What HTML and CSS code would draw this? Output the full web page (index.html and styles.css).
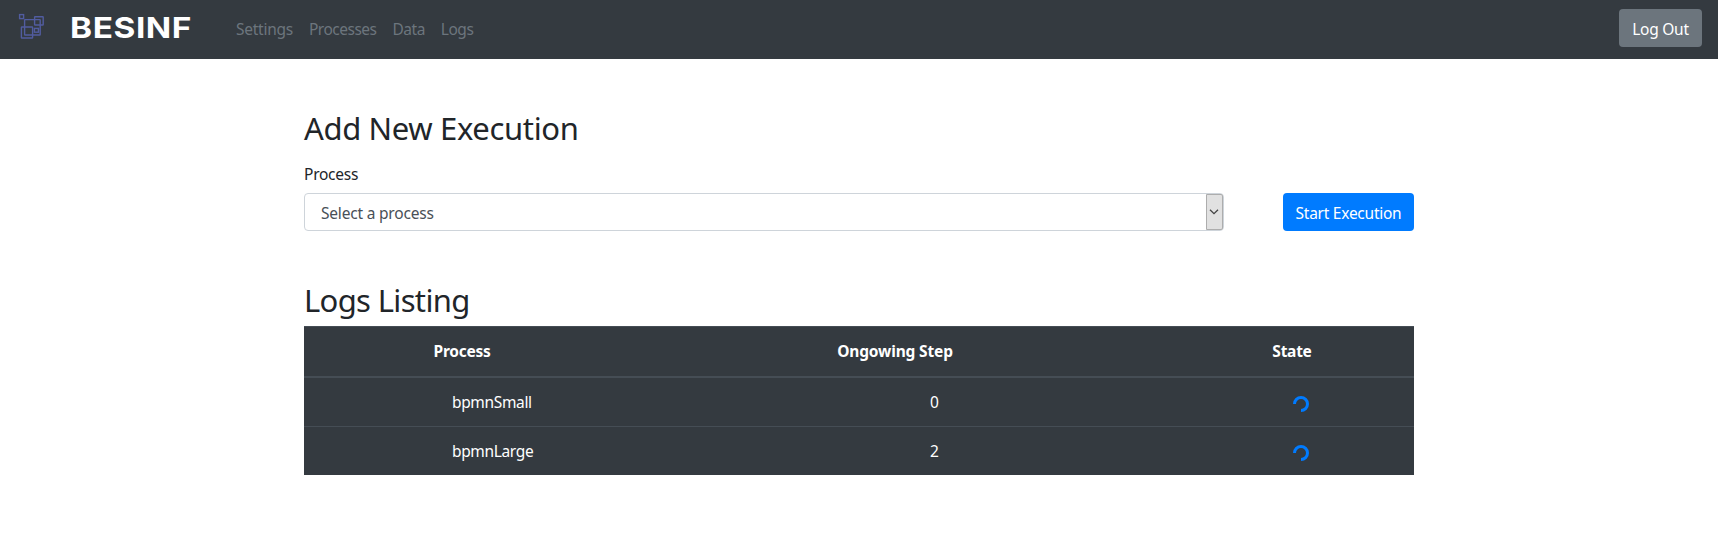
FILE: index.html
```html
<!DOCTYPE html>
<html lang="en">
<head>
<meta charset="utf-8">
<title>BESINF - Logs</title>
<link rel="stylesheet" href="styles.css">
</head>
<body>
<nav class="navbar">
  <svg class="mark" width="26" height="26" viewBox="0 0 26 26" fill="none" stroke="#515c9f" stroke-width="1.4">
    <rect x="1.6" y="1.6" width="4" height="4"/>
    <rect x="6.6" y="6.6" width="15.6" height="15.4" rx=".5"/>
    <rect x="16.6" y="3.8" width="8.6" height="8.2" rx=".5"/>
    <rect x="3.4" y="14" width="11.2" height="11" rx=".5"/>
    <rect x="16.4" y="15.4" width="4" height="3.8"/>
  </svg>
  <span class="brand">BESINF</span>
  <ul class="links">
    <li class="wide">Settings</li>
    <li>Processes</li>
    <li>Data</li>
    <li>Logs</li>
  </ul>
  <button class="btn btn-secondary">Log Out</button>
</nav>
<main class="container">
  <h2 class="title">Add New Execution</h2>
  <label class="label">Process</label>
  <div class="form-row">
    <div class="select">
      <span class="value">Select a process</span>
      <span class="arrow"><svg width="10" height="6" viewBox="0 0 10 6" fill="none" stroke="#444" stroke-width="1.3"><path d="M1 .8 5 4.6 9 .8"/></svg></span>
    </div>
    <button class="btn btn-primary">Start Execution</button>
  </div>
  <h2 class="title listing">Logs Listing</h2>
  <table class="table">
    <colgroup><col class="c1"><col class="c2"><col class="c3"></colgroup>
    <thead><tr><th>Process</th><th class="step">Ongowing Step</th><th>State</th></tr></thead>
    <tbody>
      <tr><td class="name">bpmnSmall</td><td class="num">0</td><td class="state"><svg class="spinner" width="16" height="16" viewBox="0 0 16 16" fill="none" stroke="#007bff" stroke-width="3"><path d="M1.5 8A6.5 6.5 0 1 1 8 14.5"/></svg></td></tr>
      <tr><td class="name">bpmnLarge</td><td class="num">2</td><td class="state"><svg class="spinner" width="16" height="16" viewBox="0 0 16 16" fill="none" stroke="#007bff" stroke-width="3"><path d="M1.5 8A6.5 6.5 0 1 1 8 14.5"/></svg></td></tr>
    </tbody>
  </table>
</main>
</body>
</html>
```
FILE: styles.css
```css
* { box-sizing: border-box; }
body {
  margin: 0;
  background: #fff;
  color: #212529;
  font: 15.5px/24px "Noto Sans", "Open Sans", sans-serif;
  letter-spacing: -.25px;
}
.navbar {
  display: flex;
  align-items: flex-start;
  height: 59px;
  padding: 9px 16px 0 18px;
  background: #343a40;
}
.mark { margin-top: 4px; flex: none; }
.brand {
  width: 166px;
  margin-left: 26px;
  padding-top: 2px;
  color: #fff;
  font: 700 29px/34px Inter, sans-serif;
  letter-spacing: .5px;
  transform: scaleX(1.15);
  transform-origin: 0 0;
}
.links {
  display: flex;
  gap: 16px;
  margin: 0;
  padding: 8px 0 0;
  list-style: none;
  color: #6c757d;
  letter-spacing: -.5px;
}
.wide { letter-spacing: -.25px; }
.btn {
  height: 38px;
  padding: 2px 0 0;
  border: 0;
  border-radius: 4px;
  color: #fff;
  font: inherit;
  letter-spacing: inherit;
}
.btn-secondary { width: 83px; margin-left: auto; background: #6c757d; }
.btn-primary { width: 131px; background: #007bff; }
.container { width: 1110px; margin: 0 auto; padding-top: 48px; }
.title {
  margin: 0;
  font-size: 31px;
  font-weight: 400;
  line-height: 42px;
  letter-spacing: -.35px;
}
.label { display: block; margin-top: 13px; height: 31px; }
.form-row { display: flex; justify-content: space-between; }
.select {
  display: flex;
  justify-content: space-between;
  width: 920px;
  height: 38px;
  border: 1px solid #ced4da;
  border-radius: 4px;
  color: #495057;
}
.value { padding: 7px 0 0 16px; letter-spacing: -.2px; }
.arrow {
  display: flex;
  align-items: center;
  justify-content: center;
  width: 17px;
  padding-right: 2px;
  background: #e1e1e1;
  border: 1px solid #adadad;
  border-radius: 0 2px 2px 0;
}
.listing { margin-top: 48px; height: 47px; letter-spacing: -.65px; }
.table {
  width: 1110px;
  table-layout: fixed;
  border-collapse: separate;
  border-spacing: 0;
  background: #343a40;
  color: #fff;
}
.c1 { width: 316px; }
.c2 { width: 550px; }
.c3 { width: 244px; }
th {
  height: 52px;
  padding: 0 0 1px;
  border-top: 1px solid #454d55;
  border-bottom: 2px solid #454d55;
  font-weight: 700;
}
.step { letter-spacing: -.15px; }
td { height: 49px; padding: 0; border-top: 1px solid #454d55; }
tr:first-child td { height: 48px; border-top: 0; }
.name { padding-left: 148px; letter-spacing: -.35px; }
.num { padding-left: 310px; }
tr .state { padding: 4px 0 0 123px; }
.spinner { display: block; }
```
